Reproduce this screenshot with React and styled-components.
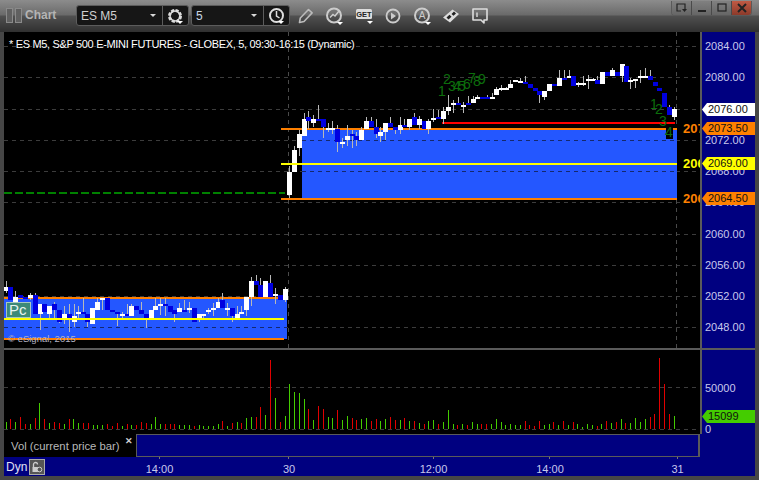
import styled, { createGlobalStyle } from "styled-components";

const GlobalStyle = createGlobalStyle`
  html, body { margin: 0; padding: 0; background: #444; }
  body { font-family: "Liberation Sans", Arial, sans-serif; }
`;

// candle rows: [x, bodyTop, bodyBottom, wickTop, wickBottom, isWhite]
// measured on 3x crops, so each group has its crop origin
const CANDLES = [
  { ox: 0, oy: 270, rows: [
    [17,50,62,33,70,1],[31,50,90,50,90,0],[46,82,97,62,100,1],[61,75,85,75,85,0],[76,82,88,82,88,0],[90,75,85,68,90,1],
    [104,75,132,70,132,0],[119,102,132,102,180,1],[133,102,127,102,127,0],[148,108,132,108,145,1],[163,102,120,97,145,0],
    [177,120,155,120,160,0],[191,132,150,108,162,1],[206,132,150,102,185,0],[221,138,156,102,170,1],[235,126,132,108,150,1],
    [248,126,132,84,132,0],[262,132,156,132,170,0],[277,114,162,114,162,1],[292,96,120,84,120,1],[307,84,90,84,120,1],
    [322,84,120,84,120,0],[336,120,126,120,126,0],[350,126,132,126,168,0],[365,132,138,125,145,1],[380,132,138,102,138,0],
    [394,108,138,102,138,1],[408,108,120,108,120,0],[422,120,132,96,132,0],[437,132,144,132,174,0],[452,120,144,120,144,1],
    [466,108,120,84,120,1],[480,102,108,84,135,1],[495,102,108,84,138,0],[509,108,126,108,126,0],[523,120,132,120,155,0],
    [538,114,126,100,126,1],[552,120,126,90,126,0],[566,114,120,96,130,1],[581,114,156,114,156,0],[596,132,150,132,155,1],
    [610,132,138,132,148,1],[624,120,126,114,132,1],[638,114,120,100,138,1],[653,96,114,84,114,1],[667,90,114,70,114,0],
    [681,114,120,100,140,1],[695,114,138,114,155,0],[710,132,144,108,150,1],[724,126,132,108,132,1],[739,81,120,81,138,1],
    [753,33,81,20,108,1],[767,33,45,15,45,0],[781,45,81,25,81,0],[796,33,81,33,81,1],[811,39,81,15,81,0],[826,72,78,55,102,1],
    [840,75,90,75,90,0],[854,57,90,50,96,1],
  ]},
  { ox: 280, oy: 100, rows: [
    [28,216,285,198,295,1],[43,150,216,138,216,1],[58,102,144,90,168,1],[73,57,108,40,108,1],[85,51,63,33,87,0],[100,57,69,45,80,1],
    [115,57,63,15,63,0],[130,57,81,57,114,0],[145,84,90,70,96,1],[157,84,90,63,102,1],[172,87,126,75,156,0],[187,126,132,114,145,1],
    [202,108,120,75,138,1],[217,102,108,90,144,0],[229,108,120,96,138,0],[244,90,120,81,120,1],[259,63,87,51,87,1],[274,63,81,51,81,0],
    [289,81,102,57,114,0],[301,96,108,81,126,1],[316,69,96,69,120,1],[331,69,81,51,81,0],[346,81,90,81,102,0],[361,75,90,51,102,1],
    [373,75,81,57,81,0],[388,57,81,57,90,1],[403,51,75,39,75,0],[418,57,75,48,87,1],[432,63,87,63,87,0],[445,63,87,57,102,1],
  ]},
  { ox: 430, oy: 60, rows: [
    [10,174,180,147,186,1],[25,171,177,150,177,0],[40,153,177,140,190,1],[55,141,153,105,165,1],[70,129,135,120,160,1],[84,129,135,110,135,0],
    [98,135,141,125,158,1],[113,129,135,108,135,0],[128,117,129,108,129,1],[142,111,117,105,117,1],[157,111,117,111,117,0],[172,111,117,105,117,0],
    [186,111,117,100,117,1],[199,87,105,80,105,1],[213,84,90,75,93,1],[228,84,90,80,90,1],[241,72,84,60,84,1],[256,60,66,60,66,1],
    [271,63,69,55,69,1],[286,66,72,48,72,0],[299,72,84,72,84,0],[314,84,93,84,93,0],[328,93,105,93,130,0],[343,93,111,93,120,1],
    [358,72,93,72,93,1],[371,72,78,72,78,0],[386,54,78,30,78,1],[401,54,60,30,60,0],[416,48,54,30,54,1],[430,48,78,48,78,0],
    [445,69,75,66,80,1],[460,69,72,48,78,1],[474,57,63,45,87,1],[488,57,63,54,63,1],[502,60,72,48,72,0],
  ]},
  { ox: 600, oy: 60, rows: [
    [5,36,72,36,72,1],[20,36,48,36,48,0],[35,30,48,24,48,1],[50,36,48,36,48,0],[65,12,48,12,66,1],[77,18,66,18,66,0],
    [90,60,66,55,88,1],[105,58,64,58,85,1],[120,48,54,30,70,1],[135,48,54,25,54,1],[150,48,60,30,60,0],[165,66,78,66,78,0],
    [178,84,93,84,93,0],[193,99,141,99,141,0],[208,141,165,135,165,0],[223,147,171,140,180,1],
  ]},
];

// volume rows: [x, top, isGreen], all down to the zero line
const VOLUME = [
  { ox: 0, oy: 350, rows: [
    [18,216,1],[31,207,0],[46,216,1],[61,201,0],[76,222,0],[90,222,1],[104,204,0],[118,159,1],[133,207,0],[148,219,1],[163,216,0],[177,219,0],
    [191,222,1],[206,207,0],[220,207,1],[235,219,1],[248,219,0],[263,219,0],[278,225,1],[292,225,1],[307,225,1],[322,222,0],[336,228,0],[350,219,0],
    [365,228,1],[380,222,0],[394,225,1],[408,225,0],[422,216,0],[437,219,0],[452,222,1],[466,201,1],[480,222,1],[495,222,0],[509,222,0],[523,222,0],
    [538,225,1],[552,225,1],[566,225,1],[581,228,0],[596,225,1],[610,228,1],[624,228,1],[638,228,1],[653,222,1],[667,213,0],[682,228,1],[695,219,0],
    [710,216,1],[724,219,0],[739,204,1],[753,201,1],[767,201,0],[781,171,0],[796,195,1],[811,30,0],[826,144,1],[840,216,0],[854,198,1],[868,102,1],
  ]},
  { ox: 290, oy: 350, rows: [
    [13,126,1],[28,129,1],[43,147,1],[55,177,0],[70,210,1],[85,168,0],[100,177,0],[115,201,1],[127,204,1],[142,180,0],[157,210,1],[172,198,1],
    [187,204,0],[199,210,0],[214,207,1],[229,204,1],[244,213,0],[259,207,0],[271,213,1],[286,207,1],[301,201,0],[316,210,0],[331,210,1],[343,204,0],
    [358,213,1],[373,213,0],[388,219,1],[403,222,0],[415,213,1],[430,210,1],[445,222,0],[460,216,1],[475,180,1],[490,222,1],[502,225,0],[517,222,1],
    [532,225,0],[547,216,1],[562,222,1],[574,222,0],[589,222,0],[604,222,1],[619,207,1],[634,216,1],[646,225,1],[661,222,1],[676,225,1],[691,225,1],
    [706,213,0],[718,225,0],[733,228,0],[748,213,0],[763,225,1],[778,222,1],[790,216,0],[805,225,1],[820,213,0],[835,225,1],[850,216,0],[862,222,1],
    [877,231,1],[892,222,1],[907,225,1],[922,228,0],[934,222,1],[949,213,0],
  ]},
  { ox: 600, oy: 340, rows: [
    [34,249,1],[49,246,0],[64,237,1],[76,249,0],[91,249,1],[106,234,1],[121,246,1],[136,237,1],[151,231,0],[163,222,0],[178,54,0],[193,132,0],[208,222,0],[223,228,1],
  ]},
];

const SEQ_DIGITS = [
  [442, 96, "1"], [447, 84, "2"], [452, 91, "3"], [457, 91, "4"], [462, 91, "5"], [467, 89, "6"], [472, 83, "7"], [477, 86, "8"], [482, 84, "9"],
  [654, 109, "1"], [659, 114, "2"], [663, 126, "3"], [669, 137, "4"],
];

const PRICE_TICKS = ["2084.00", "2080.00", "2076.00", "2072.00", "2068.00", "2064.00", "2060.00", "2056.00", "2052.00", "2048.00"];
const GRID_Y = [46, 77.25, 108.5, 139.75, 171, 202.25, 233.5, 264.75, 296, 327.25];

const TIME_TICKS = [
  { label: "14:00", gap: 94.5 },
  { label: "30", gap: 89.5 },
  { label: "12:00", gap: 104.5 },
  { label: "14:00", gap: 76.5 },
  { label: "31", gap: 87.5 },
];

const Window = styled.div`
  width: 759px;
  height: 480px;
  box-sizing: border-box;
  padding: 0 4px 4px;
  background: #464646;
  display: flex;
  flex-direction: column;
  overflow: hidden;
`;

const TitleBar = styled.div`
  height: 32px;
  margin: 0 -4px;
  padding: 0 7px 0 6px;
  box-sizing: border-box;
  display: flex;
  align-items: flex-start;
  background: linear-gradient(#8c8c8c 0, #6a6a6a 15px, #505050 16px, #303030 32px);
`;

const GripBox = styled.span`
  width: 5px;
  height: 13px;
  margin: 8px 2px 0 0;
  background: #606060;
  border: 1px solid #8a8a8a;
`;

const TitleText = styled.span`
  margin: 8px 20px 0 1px;
  width: 31px;
  font-size: 12px;
  line-height: 14px;
  font-weight: bold;
  color: #b4b4b4;
`;

const Combo = styled.div`
  width: ${(p) => p.$width}px;
  height: 21px;
  margin: 5px 2px 0 0;
  box-sizing: border-box;
  display: flex;
  align-items: center;
  background: #161616;
  border: 1px solid #5c5c5c;
  border-radius: 3px;
`;

const ComboText = styled.span`
  flex: 1;
  padding-left: 4px;
  font-size: 12px;
  color: ${(p) => p.$color};
`;

const ComboArrow = styled.span`
  width: 0;
  height: 0;
  margin-right: 6px;
  border-left: 3px solid transparent;
  border-right: 3px solid transparent;
  border-top: 3px solid #d8d8d8;
`;

const ComboIcon = styled.span`
  width: 25px;
  height: 19px;
  display: flex;
  align-items: center;
  justify-content: center;
  border-left: 1px solid #5c5c5c;
`;

const ToolIcon = styled.span`
  height: 22px;
  margin: 5px 0 0 ${(p) => p.$gap}px;
  display: flex;
  align-items: center;
`;

const WindowButtons = styled.div`
  margin-left: auto;
  margin-top: 1px;
  height: 14px;
  display: flex;
  border: 1px solid #5a5a5a;
  border-top: none;
  border-radius: 0 0 4px 4px;
  overflow: hidden;
`;

const WindowButton = styled.span`
  width: 19px;
  display: flex;
  align-items: center;
  justify-content: center;
  border-left: ${(p) => (p.$first ? "none" : "1px solid #4a4a4a")};
  background: ${(p) => (p.$close ? "linear-gradient(#c05a44, #8c3a2a)" : "linear-gradient(#808080, #666)")};
`;

const PaneRow = styled.div`
  height: ${(p) => p.$height}px;
  display: flex;
  flex-shrink: 0;
`;

const Plot = styled.div`
  width: 696px;
  height: 100%;
  position: relative;
  overflow: hidden;
  background: #000;
  flex-shrink: 0;
`;

const PlotSvg = styled.svg`
  display: block;
  width: 100%;
  height: 100%;
`;

const ChartTitle = styled.div`
  position: absolute;
  left: 5px;
  top: 6px;
  font-size: 11px;
  letter-spacing: -0.33px;
  line-height: 13px;
  color: #fff;
  white-space: nowrap;
`;

const PcBadge = styled.div`
  position: absolute;
  left: 2px;
  top: 270px;
  width: 25px;
  height: 16px;
  box-sizing: border-box;
  border: 1px solid #a8c8c0;
  background: #3d8a78;
  color: #e8f4f0;
  font-size: 15px;
  line-height: 14px;
  padding-left: 2px;
`;

const Watermark = styled.div`
  position: absolute;
  left: 4px;
  top: 301px;
  font-size: 9.5px;
  line-height: 12px;
  color: #b4b4c4;
  white-space: nowrap;
`;

const PriceAxis = styled.div`
  flex: 1;
  position: relative;
  background: #000080;
  border-left: 2px solid #5a5a5a;
  padding: ${(p) => p.$top}px 0 0 3px;
  display: flex;
  flex-direction: column;
  gap: ${(p) => p.$gap}px;
  overflow: hidden;
`;

const AxisLabel = styled.span`
  height: 12px;
  font-size: 11px;
  line-height: 12px;
  color: #c8c8ec;
`;

const PriceTag = styled.div`
  position: absolute;
  left: 0;
  top: ${(p) => p.$top}px;
  width: 54px;
  height: 13px;
  box-sizing: border-box;
  padding-left: 6px;
  background: ${(p) => p.$bg};
  clip-path: polygon(5px 0, 100% 0, 100% 100%, 5px 100%, 0 50%);
  color: #111;
  font-size: 11px;
  line-height: 13px;
`;

const Divider = styled.div`
  height: 2px;
  background: #5a5a5a;
  flex-shrink: 0;
`;

const TabRow = styled.div`
  height: 23px;
  display: flex;
  flex-shrink: 0;
`;

const Tab = styled.div`
  width: 125px;
  position: relative;
  background: #000;
  border-right: 1px solid #5a5a5a;
  padding: 5px 0 0 7px;
  font-size: 11.3px;
  line-height: 14px;
  color: #b8b8b8;
  white-space: nowrap;
`;

const TabClose = styled.span`
  position: absolute;
  right: 3px;
  top: 1px;
  font-size: 9px;
  line-height: 12px;
  font-weight: bold;
  color: #cfcfcf;
`;

const TabStrip = styled.div`
  width: 563px;
  box-sizing: border-box;
  background: #000080;
  border-top: 1px solid #5a5a5a;
  border-right: 2px solid #5a5a5a;
  border-bottom: 1px solid #5a5a5a;
`;

const TabRest = styled.div`
  flex: 1;
  background: #000080;
`;

const TimeAxis = styled.div`
  height: 19px;
  display: flex;
  align-items: center;
  background: #000080;
  flex-shrink: 0;
`;

const DynLabel = styled.span`
  margin-left: 2px;
  width: 21px;
  font-size: 12px;
  color: #e0e0f4;
`;

const LockBox = styled.span`
  width: 14px;
  height: 14px;
  margin: 0 0 0 2px;
  display: flex;
  align-items: center;
  justify-content: center;
  background: #555;
  border: 1px solid #aaa;
`;

const TimeTick = styled.span`
  position: relative;
  width: 40px;
  height: 100%;
  margin-left: ${(p) => p.$gap}px;
  text-align: center;
  font-size: 11px;
  line-height: 24px;
  color: #c8c8ec;
  &::before {
    content: "";
    position: absolute;
    left: 19px;
    top: 0;
    width: 1px;
    height: 2px;
    background: #777;
  }
`;

function Caret({ x, y }) {
  return <path d={`M${x} ${y}h6l-3 3z`} fill="#fff" />;
}

function GearIcon() {
  return (
    <svg width="18" height="18" viewBox="0 0 18 18" fill="none">
      <circle cx="8" cy="9" r="5.5" stroke="#ddd" strokeWidth="3" strokeDasharray="3 1.3" />
      <circle cx="8" cy="9" r="5" stroke="#ddd" strokeWidth="1.5" />
      <Caret x={10} y={14} />
    </svg>
  );
}

function ClockIcon() {
  return (
    <svg width="18" height="18" viewBox="0 0 18 18" fill="none">
      <circle cx="8.5" cy="8.5" r="6.5" stroke="#ddd" strokeWidth="2" />
      <path d="M8.5 4v5l3 2" stroke="#ddd" strokeWidth="1.5" />
      <Caret x={10} y={14} />
    </svg>
  );
}

function PencilIcon() {
  return (
    <svg width="28" height="18" viewBox="-5 0 28 18" fill="none">
      <path d="M2.5 15.5l.8-4.5L11.5 2.5l3.6 3.4L7 14.5z" stroke="#bbb" strokeWidth="1.6" strokeLinejoin="round" />
    </svg>
  );
}

function TrendIcon() {
  return (
    <svg width="20" height="20" viewBox="0 0 20 20" fill="none">
      <circle cx="9" cy="9.5" r="7" stroke="#ccc" strokeWidth="2" />
      <path d="M5 11.5l3-3 2 1.5 4-5" stroke="#ccc" strokeWidth="1.5" />
      <Caret x={12} y={16} />
    </svg>
  );
}

function GetIcon() {
  return (
    <svg width="22" height="20" viewBox="0 0 22 20">
      <rect x="1" y="3" width="16" height="10" rx="1.5" fill="#ddd" />
      <text x="9" y="11" textAnchor="middle" fontFamily="Liberation Sans" fontWeight="bold" fontSize="7.5" fill="#222">GET</text>
      <Caret x={12} y={15} />
    </svg>
  );
}

function PlayIcon() {
  return (
    <svg width="16" height="16" viewBox="0 0 16 16" fill="none">
      <circle cx="8" cy="8" r="6.5" stroke="#ccc" strokeWidth="1.8" />
      <path d="M6 4.5l5 3.5-5 3.5z" fill="#ccc" />
    </svg>
  );
}

function AlertIcon() {
  return (
    <svg width="20" height="20" viewBox="0 0 20 20" fill="none">
      <circle cx="9" cy="9.5" r="7" stroke="#ccc" strokeWidth="2" />
      <text x="9" y="13" textAnchor="middle" fontFamily="Liberation Sans" fontSize="10" fill="#ccc">A</text>
      <Caret x={12} y={16} />
    </svg>
  );
}

function SwapIcon() {
  return (
    <svg width="18" height="18" viewBox="0 0 18 18">
      <path d="M1 10.5L10.5 2.5l6.5 4.5-9 8.5z" fill="#ddd" />
      <path d="M4.5 10.5l3-2.8 2 2-3 2.8zM9.5 7l2.5-2.4 2 1.8-2.5 2.4z" fill="#222" />
    </svg>
  );
}

function NoteIcon() {
  return (
    <svg width="18" height="18" viewBox="0 0 18 18" fill="none">
      <path d="M2 2h14v11h-3v3l-3-3H2z" stroke="#ddd" strokeWidth="1.6" strokeLinejoin="round" />
      <path d="M6 5.5v4.5" stroke="#ddd" strokeWidth="1.4" />
    </svg>
  );
}

function MainPlot() {
  return (
    <PlotSvg viewBox="4 32 696 316" shapeRendering="crispEdges">
      {GRID_Y.map((y) => (
        <line key={y} x1="4" x2="700" y1={Math.round(y)} y2={Math.round(y)} stroke="#3c3c3c" strokeDasharray="4 4" />
      ))}
      <line x1="288" x2="288" y1="32" y2="348" stroke="#4a4a4a" strokeDasharray="4 4" />
      <line x1="676" x2="676" y1="32" y2="348" stroke="#4a4a4a" strokeDasharray="4 4" />

      <rect x="4" y="298" width="283" height="41" fill="#2457ff" />
      <rect x="302" y="129" width="375" height="70" fill="#2457ff" />
      <line x1="4" x2="287" y1="327" y2="327" stroke="#14286e" strokeDasharray="4 4" />
      <line x1="302" x2="677" y1="140" y2="140" stroke="#14286e" strokeDasharray="4 4" />
      <line x1="302" x2="677" y1="171" y2="171" stroke="#14286e" strokeDasharray="4 4" />

      <line x1="4" x2="285" y1="193" y2="193" stroke="#008000" strokeWidth="2" strokeDasharray="8 3" />

      <rect x="4" y="297" width="283" height="2" fill="#ff8000" />
      <rect x="281" y="128" width="396" height="2" fill="#ff8000" />
      <rect x="442" y="122" width="233" height="2" fill="#ff0000" />

      {CANDLES.map((group) =>
        group.rows.map(([x, top, bottom, wickTop, wickBottom, white]) => {
          const cx = Math.round(group.ox + x / 3);
          const y1 = Math.round(group.oy + top / 3);
          const y2 = Math.round(group.oy + bottom / 3);
          return (
            <g key={`${group.ox}-${x}`}>
              <rect x={cx} y={Math.round(group.oy + wickTop / 3)} width="1" height={Math.round((wickBottom - wickTop) / 3)} fill="#b8b8b8" />
              <rect x={cx - 2} y={y1} width="5" height={Math.max(2, y2 - y1)} fill={white ? "#fff" : "#0000e0"} />
            </g>
          );
        })
      )}

      {/* these levels run over the candles */}
      <rect x="4" y="318" width="280" height="2" fill="#ffff00" />
      <rect x="4" y="338" width="280" height="2" fill="#ff8000" />
      <rect x="281" y="163" width="396" height="2" fill="#ffff00" />
      <rect x="281" y="198" width="396" height="2" fill="#ff8000" />

      <rect x="666" y="128" width="7" height="11" fill="#000" />
      <g shapeRendering="auto" fontFamily="Liberation Sans" fontSize="14" fill="#0c6e0c">
        {SEQ_DIGITS.map(([x, y, digit]) => (
          <text key={`${x}-${digit}`} x={x} y={y} textAnchor="middle">{digit}</text>
        ))}
      </g>
      <g shapeRendering="auto" fontFamily="Liberation Sans" fontSize="13" fontWeight="bold">
        <text x="683" y="133" fill="#ff8000">207</text>
        <text x="683" y="168" fill="#ffff00">206</text>
        <text x="683" y="203" fill="#ff8000">206</text>
      </g>
    </PlotSvg>
  );
}

function VolumePlot() {
  return (
    <PlotSvg viewBox="4 350 696 84" shapeRendering="crispEdges">
      <line x1="4" x2="700" y1="387" y2="387" stroke="#3c3c3c" strokeDasharray="4 4" />
      <line x1="4" x2="700" y1="429" y2="429" stroke="#3c3c3c" strokeDasharray="4 4" />
      {VOLUME.map((group) =>
        group.rows.map(([x, top, green]) => {
          const bx = Math.round(group.ox + x / 3);
          const y = Math.round(group.oy + top / 3);
          return <rect key={`${group.ox}-${x}`} x={bx} y={y} width="1" height={429 - y} fill={green ? "#44cc00" : "#e00000"} />;
        })
      )}
    </PlotSvg>
  );
}

export default function App() {
  return (
    <>
      <GlobalStyle />
      <Window>
        <TitleBar>
          <GripBox />
          <GripBox />
          <TitleText>Chart</TitleText>
          <Combo $width={113}>
            <ComboText $color="#d0d0d0">ES M5</ComboText>
            <ComboArrow />
            <ComboIcon><GearIcon /></ComboIcon>
          </Combo>
          <Combo $width={99}>
            <ComboText $color="#c8d8e8">5</ComboText>
            <ComboArrow />
            <ComboIcon><ClockIcon /></ComboIcon>
          </Combo>
          <ToolIcon $gap={0}><PencilIcon /></ToolIcon>
          <ToolIcon $gap={5}><TrendIcon /></ToolIcon>
          <ToolIcon $gap={10}><GetIcon /></ToolIcon>
          <ToolIcon $gap={8}><PlayIcon /></ToolIcon>
          <ToolIcon $gap={12}><AlertIcon /></ToolIcon>
          <ToolIcon $gap={9}><SwapIcon /></ToolIcon>
          <ToolIcon $gap={11}><NoteIcon /></ToolIcon>
          <WindowButtons>
            <WindowButton $first>
              <svg width="12" height="10" viewBox="0 0 12 10" fill="none">
                <path d="M9 6V1H1v7h4" stroke="#222" strokeWidth="1.2" />
                <path d="M6 6h5L8.5 9z" fill="#222" />
              </svg>
            </WindowButton>
            <WindowButton>
              <svg width="10" height="10" viewBox="0 0 10 10"><rect x="1" y="7" width="8" height="2" fill="#222" /></svg>
            </WindowButton>
            <WindowButton>
              <svg width="10" height="10" viewBox="0 0 10 10" fill="none"><rect x="1" y="1" width="8" height="7" stroke="#222" strokeWidth="1.2" /></svg>
            </WindowButton>
            <WindowButton $close>
              <svg width="10" height="10" viewBox="0 0 10 10"><path d="M1 1l8 8M9 1l-8 8" stroke="#222" strokeWidth="2" /></svg>
            </WindowButton>
          </WindowButtons>
        </TitleBar>

        <PaneRow $height={316}>
          <Plot>
            <MainPlot />
            <ChartTitle>* ES M5, S&amp;P 500 E-MINI FUTURES - GLOBEX, 5, 09:30-16:15 (Dynamic)</ChartTitle>
            <PcBadge>Pc</PcBadge>
            <Watermark>© eSignal, 2015</Watermark>
          </Plot>
          <PriceAxis $top={8} $gap={19.25}>
            {PRICE_TICKS.map((t) => <AxisLabel key={t}>{t}</AxisLabel>)}
            <PriceTag $top={71} $bg="#fff">2076.00</PriceTag>
            <PriceTag $top={90} $bg="#ff8000">2073.50</PriceTag>
            <PriceTag $top={125} $bg="#ffff00">2069.00</PriceTag>
            <PriceTag $top={160} $bg="#ff8000">2064.50</PriceTag>
          </PriceAxis>
        </PaneRow>
        <Divider />
        <PaneRow $height={84}>
          <Plot><VolumePlot /></Plot>
          <PriceAxis $top={32} $gap={29}>
            <AxisLabel>50000</AxisLabel>
            <AxisLabel>0</AxisLabel>
            <PriceTag $top={60} $bg="#44cc00">15099</PriceTag>
          </PriceAxis>
        </PaneRow>
        <TabRow>
          <Tab>
            Vol (current price bar)
            <TabClose>✕</TabClose>
          </Tab>
          <TabStrip />
          <TabRest />
        </TabRow>
        <TimeAxis>
          <DynLabel>Dyn</DynLabel>
          <LockBox>
            <svg width="12" height="12" viewBox="0 0 12 12" fill="none">
              <path d="M2.5 6V3.5a2 2 0 0 1 4 0" stroke="#ccc" strokeWidth="1.3" />
              <rect x="1.5" y="6" width="6" height="5" fill="#ccc" />
              <circle cx="8.5" cy="8.5" r="2.3" fill="#555" stroke="#ccc" />
            </svg>
          </LockBox>
          {TIME_TICKS.map((t, i) => <TimeTick key={i} $gap={t.gap}>{t.label}</TimeTick>)}
        </TimeAxis>
      </Window>
    </>
  );
}
